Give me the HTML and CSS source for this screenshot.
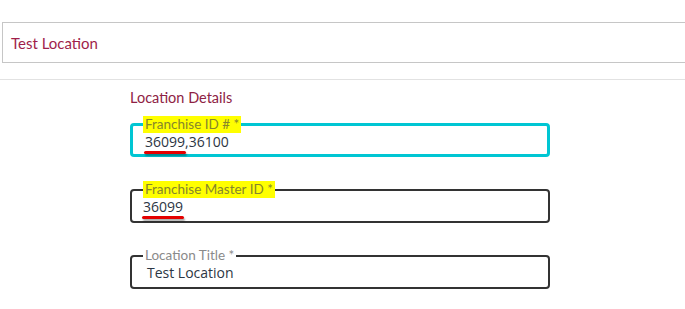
FILE: index.html
```html
<!DOCTYPE html>
<html lang="en">
<head>
    <meta charset="UTF-8">
    <meta name="viewport" content="width=device-width, initial-scale=1.0">
    <title>Test Location</title>
    <link rel="stylesheet" href="styles.css">
</head>
<body>
    <div class="topbar">
        <span class="topbar-title">Test Location</span>
    </div>
    <div class="divider"></div>

    <div class="details">
        <div class="details-title">Location Details</div>

        <fieldset class="field focused">
            <legend class="marked">Franchise ID # *</legend>
            <div class="value pad-s"><span class="scribble">36099</span>,36100</div>
        </fieldset>

        <fieldset class="field">
            <legend class="marked">Franchise Master ID *</legend>
            <div class="value"><span class="scribble">36099</span></div>
        </fieldset>

        <fieldset class="field">
            <legend>Location Title *</legend>
            <div class="value pad-l">Test Location</div>
        </fieldset>
    </div>
</body>
</html>
```

FILE: styles.css
```css
* {
    box-sizing: border-box;
}

body {
    margin: 0;
    background-color: white;
    font-family: Lato, "Noto Sans", sans-serif;
}

.topbar {
    display: flex;
    align-items: center;
    height: 41px;
    margin: 22px 0 0 2px;
    padding-left: 8px;
    border: 1px solid #c6c6c6;
    border-right: none;
}

.topbar-title {
    font-size: 15px;
    color: #a01e4a;
}

.divider {
    margin-top: 16px;
    border-top: 1px solid #e2e2e2;
}

.details {
    width: 420px;
    margin-left: 130px;
    padding-top: 9px;
}

.details-title {
    font-size: 14.5px;
    line-height: 18px;
    color: #8e2244;
    margin-bottom: 9px;
}

.field {
    margin: 0 0 24px 0;
    min-width: 0;
    padding: 0 10px 6px 11px;
    border: 2px solid #333;
    border-radius: 4px;
}

.field.focused {
    padding: 0 10px 4px 10px;
    border: 3px solid #00c6d3;
}

.field legend {
    padding: 0 2px;
    font-size: 13.5px;
    line-height: 17px;
    color: #8a8a8a;
}

.field legend.marked {
    background-color: #ffff00;
    color: #86862c;
}

.value {
    font-family: "Open Sans", "Noto Sans", sans-serif;
    font-size: 14px;
    line-height: 17px;
    color: #2c3644;
}

.pad-s {
    padding-left: 2px;
}

.pad-l {
    padding-left: 4px;
}

.scribble {
    position: relative;
}

.scribble::after {
    content: "";
    position: absolute;
    left: -1px;
    right: -1px;
    bottom: -3px;
    height: 3px;
    border-radius: 2px;
    background-color: #e40000;
    box-shadow: 1px 2px 2px rgba(0, 0, 0, 0.35);
}
```
